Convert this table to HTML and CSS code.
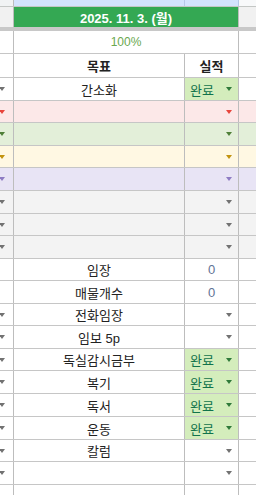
FILE: index.html
```html
<!DOCTYPE html>
<html lang="ko">
<head>
<meta charset="utf-8">
<link rel="stylesheet" href="styles.css">
</head>
<body>
<div class="sheet">
  <div class="row r-colhdr">
    <div class="c a"></div><div class="c b sel"></div><div class="c cc sel"></div><div class="c d"></div>
  </div>
  <div class="row r-title">
    <div class="c a grey"></div><div class="c bc title">2025. 11. 3. (월)</div><div class="c d grey"></div>
  </div>
  <div class="freeze"></div>
  <div class="row r-pct">
    <div class="c a"></div><div class="c bc pct">100%</div><div class="c d"></div>
  </div>
  <div class="row r-head">
    <div class="c a"></div><div class="c b head">목표</div><div class="c cc head">실적</div><div class="c d"></div>
  </div>

  <div class="row">
    <div class="c a"><span class="arr"></span></div><div class="c b">간소화</div>
    <div class="c cc chip"><span>완료</span><span class="arr arr-g"></span></div><div class="c d"></div>
  </div>
  <div class="row h22 pink">
    <div class="c a"><span class="arr arr-red"></span></div><div class="c b"></div>
    <div class="c cc drop"><span class="arr arr-red"></span></div><div class="c d"></div>
  </div>
  <div class="row green">
    <div class="c a"><span class="arr arr-grn"></span></div><div class="c b"></div>
    <div class="c cc drop"><span class="arr arr-grn"></span></div><div class="c d"></div>
  </div>
  <div class="row h22 yellow">
    <div class="c a"><span class="arr arr-ylw"></span></div><div class="c b"></div>
    <div class="c cc drop"><span class="arr arr-ylw"></span></div><div class="c d"></div>
  </div>
  <div class="row purple">
    <div class="c a"><span class="arr arr-prp"></span></div><div class="c b"></div>
    <div class="c cc drop"><span class="arr arr-prp"></span></div><div class="c d"></div>
  </div>
  <div class="row grey">
    <div class="c a"><span class="arr"></span></div><div class="c b"></div>
    <div class="c cc drop"><span class="arr"></span></div><div class="c d"></div>
  </div>
  <div class="row h22 grey">
    <div class="c a"><span class="arr"></span></div><div class="c b"></div>
    <div class="c cc drop"><span class="arr"></span></div><div class="c d"></div>
  </div>
  <div class="row grey">
    <div class="c a"><span class="arr"></span></div><div class="c b"></div>
    <div class="c cc drop"><span class="arr"></span></div><div class="c d"></div>
  </div>
  <div class="row h22">
    <div class="c a"></div><div class="c b">임장</div>
    <div class="c cc num">0</div><div class="c d"></div>
  </div>
  <div class="row">
    <div class="c a"></div><div class="c b">매물개수</div>
    <div class="c cc num">0</div><div class="c d"></div>
  </div>
  <div class="row h22">
    <div class="c a"><span class="arr"></span></div><div class="c b">전화임장</div>
    <div class="c cc drop"><span class="arr"></span></div><div class="c d"></div>
  </div>
  <div class="row">
    <div class="c a"><span class="arr"></span></div><div class="c b">임보 5p</div>
    <div class="c cc drop"><span class="arr"></span></div><div class="c d"></div>
  </div>
  <div class="row h22">
    <div class="c a"><span class="arr"></span></div><div class="c b">독실감시금부</div>
    <div class="c cc chip"><span>완료</span><span class="arr arr-g"></span></div><div class="c d"></div>
  </div>
  <div class="row">
    <div class="c a"><span class="arr"></span></div><div class="c b">복기</div>
    <div class="c cc chip"><span>완료</span><span class="arr arr-g"></span></div><div class="c d"></div>
  </div>
  <div class="row">
    <div class="c a"><span class="arr"></span></div><div class="c b">독서</div>
    <div class="c cc chip"><span>완료</span><span class="arr arr-g"></span></div><div class="c d"></div>
  </div>
  <div class="row">
    <div class="c a"><span class="arr"></span></div><div class="c b">운동</div>
    <div class="c cc chip"><span>완료</span><span class="arr arr-g"></span></div><div class="c d"></div>
  </div>
  <div class="row h22">
    <div class="c a"><span class="arr"></span></div><div class="c b">칼럼</div>
    <div class="c cc drop"><span class="arr"></span></div><div class="c d"></div>
  </div>
  <div class="row">
    <div class="c a"><span class="arr"></span></div><div class="c b"></div>
    <div class="c cc drop"><span class="arr"></span></div><div class="c d"></div>
  </div>
  <div class="row">
    <div class="c a"></div><div class="c b"></div>
    <div class="c cc"></div><div class="c d"></div>
  </div>
</div>
</body>
</html>
```

FILE: styles.css
```css
html, body {
  margin: 0;
  padding: 0;
  background: #ffffff;
}
.sheet {
  width: 256px;
  height: 495px;
  overflow: hidden;
  font-family: "Liberation Sans", "Noto Sans CJK KR", sans-serif;
  font-size: 13px;
  color: #222222;
}
.row {
  display: flex;
  height: 23px;
  box-sizing: border-box;
  border-bottom: 1px solid #c6c6c6;
}
.row.h22 { height: 22px; }
.c {
  box-sizing: border-box;
  border-right: 1px solid #bdbdbd;
  display: flex;
  align-items: center;
  justify-content: center;
  white-space: nowrap;
  overflow: hidden;
}
.a { width: 14px; justify-content: flex-start; }
.b { width: 171px; }
.cc { width: 54px; }
.bc { width: 225px; }
.d { flex: 1; border-right: none; }

.r-colhdr { height: 7px; border-bottom-color: #c4c7c5; }
.r-colhdr .a { background: #f1f3f4; }
.r-colhdr .sel { background: #d3e3fd; border-right-color: #b6c8e8; }
.r-colhdr .d { background: #f8f9fa; }

.r-title { height: 20px; border-bottom: none; }
.r-title .grey { background: #f1f1f1; }
.title {
  background: #34a853;
  color: #ffffff;
  font-weight: bold;
  font-size: 13px;
}
.freeze {
  height: 4px;
  background: #c8c8c8;
}
.r-pct { height: 23px; }
.pct {
  color: #6aa84f;
  font-size: 12px;
}
.r-head { height: 24px; }
.head { font-weight: bold; }

.pink { background: #fce8e8; }
.green { background: #e3efd9; }
.yellow { background: #fff8e3; }
.purple { background: #e8e4f5; }
.grey { background: #f3f3f3; }

.arr {
  display: block;
  width: 0;
  height: 0;
  border-left: 3.5px solid transparent;
  border-right: 3.5px solid transparent;
  border-top: 4px solid #727272;
}
.a .arr { margin-left: -1px; }
.arr-red { border-top-color: #e8453c; }
.arr-grn { border-top-color: #4f7f38; }
.arr-ylw { border-top-color: #c2930f; }
.arr-prp { border-top-color: #8e7cc3; }
.arr-g { border-top-color: #2f7a3a; }

.drop {
  justify-content: flex-end;
  padding-right: 6px;
}
.chip {
  background: #d4edbc;
  color: #11734b;
  justify-content: space-between;
  padding: 0 6px 0 5px;
}
.num {
  color: #5f7396;
}
```
